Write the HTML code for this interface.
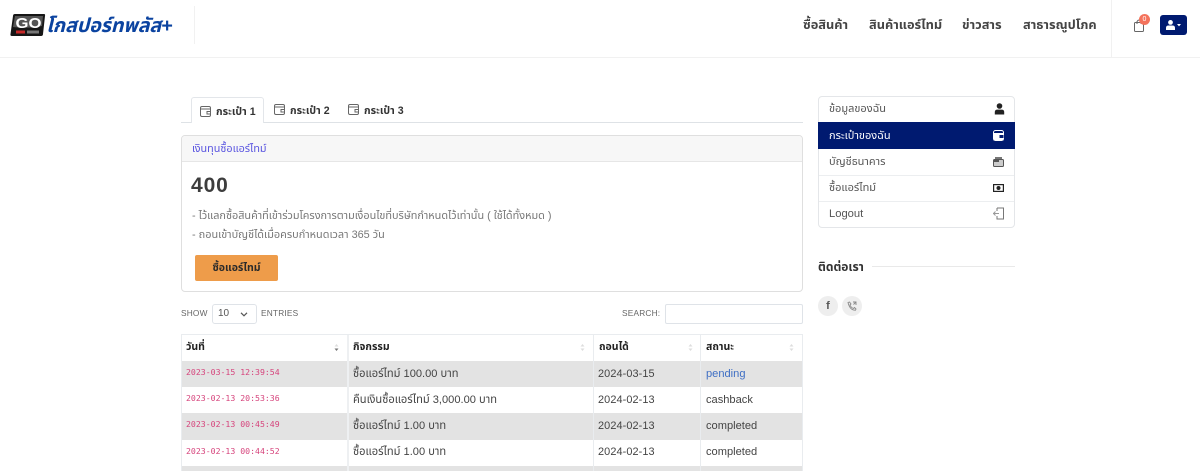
<!DOCTYPE html>
<html lang="th"><head><meta charset="utf-8"><title>โกสปอร์ทพลัส</title>
<style>
*{box-sizing:border-box}
html,body{margin:0;padding:0}
body{width:1200px;height:471px;overflow:hidden;position:relative;background:#fff;font-family:"Liberation Sans","Noto Sans Thai","Noto Sans CJK SC",sans-serif;color:#444}
.a{position:absolute;white-space:nowrap}
.nav{top:17px;font-size:12.8px;font-weight:700;color:#444;line-height:16px}
.tab{top:104px;font-size:10.6px;font-weight:700;color:#333;line-height:15px}
.m{left:829px;font-size:11px;line-height:14px;color:#555}
.r{position:absolute;left:182px;width:620px}
.c{position:absolute;white-space:nowrap;font-size:11.1px;line-height:14px;color:#444}
.d{font-size:10.9px;letter-spacing:.1px}
.t{font-family:"DejaVu Sans Mono","Liberation Mono",monospace;font-size:8.2px;color:#d6447c}
.th{font-weight:700;font-size:10.5px;color:#222}
.v{position:absolute;width:1px;top:335px;height:136px;background:#e9ecef}
.lab{font-size:8.3px;line-height:11px;letter-spacing:.2px;color:#666}
</style></head><body>

<div class="a" style="left:0;top:57px;width:1200px;height:1px;background:#f1f1f1"></div>
<div class="a" style="left:194px;top:6px;width:1px;height:38px;background:#f1f1f1"></div>
<div class="a" style="left:1111px;top:0;width:1px;height:57px;background:#f1f1f1"></div>

<svg class="a" style="left:10px;top:13px" width="36" height="24" viewBox="0 0 36 24">
<path d="M5 1H34Q35.5 1 35 3L33 21Q33 23 31 23H2Q0 23 .5 21L3 3Q3 1 5 1Z" fill="#161616"/>
<path d="M5 3H33L32 13Q18 16 3 14Z" fill="#555"/>
<text x="5.5" y="15" font-family="Liberation Sans" font-weight="700" font-size="15" fill="#fff" textLength="26" lengthAdjust="spacingAndGlyphs">GO</text>
<rect x="6" y="17.5" width="9" height="3" fill="#c62828"/>
<rect x="17" y="17.5" width="12" height="3" fill="#777"/>
</svg>
<div class="a" style="left:46px;top:14px;font-size:19.7px;font-weight:700;font-style:italic;color:#0b43a0;line-height:24px;letter-spacing:-.1px">โกสปอร์ทพลัส+</div>

<div class="a nav" style="left:803px">ซื้อสินค้า</div>
<div class="a nav" style="left:869px">สินค้าแอร์ไทม์</div>
<div class="a nav" style="left:962px">ข่าวสาร</div>
<div class="a nav" style="left:1023px">สาธารณูปโภค</div>

<svg class="a" style="left:1133px;top:19px" width="12" height="13" viewBox="0 0 12 13" fill="none" stroke="#666" stroke-width="1"><rect x="1.5" y="3.5" width="9" height="9" rx="1"/><path d="M4 5V2.5Q6-.5 8 2.5V5"/></svg>
<div class="a" style="left:1139px;top:14px;width:11px;height:11px;border-radius:50%;background:#f4735c;color:#fff;font-size:7px;line-height:11px;text-align:center">0</div>
<div class="a" style="left:1160px;top:15px;width:27px;height:20px;border-radius:3px;background:#001a70"></div>
<svg class="a" style="left:1166px;top:20px" width="16" height="10" viewBox="0 0 16 10" fill="#fff"><circle cx="4.5" cy="2.4" r="2.4"/><path d="M0 10V8Q0 5.5 2.5 5.5H6.5Q9 5.5 9 8V10Z"/><path d="M11 4H15L13 6.4Z"/></svg>

<div class="a" style="left:181px;top:122px;width:622px;height:1px;background:#dee2e6"></div>
<div class="a" style="left:191px;top:97px;width:73px;height:26px;background:#fff;border:1px solid #e3e6ea;border-bottom:0;border-radius:3px 3px 0 0"></div>
<svg class="a" style="left:200px;top:106px" width="11" height="11" viewBox="0 0 11 11" fill="none" stroke="#666"><rect x=".5" y=".5" width="10" height="10" rx="1.5"/><path d="M.5 3H10.5M10.5 5.5H7V8H10.5"/></svg>
<div class="a tab" style="left:216px;top:105px">กระเป๋า 1</div>
<svg class="a" style="left:274px;top:104px" width="11" height="11" viewBox="0 0 11 11" fill="none" stroke="#666"><rect x=".5" y=".5" width="10" height="10" rx="1.5"/><path d="M.5 3H10.5M10.5 5.5H7V8H10.5"/></svg>
<div class="a tab" style="left:290px">กระเป๋า 2</div>
<svg class="a" style="left:348px;top:104px" width="11" height="11" viewBox="0 0 11 11" fill="none" stroke="#666"><rect x=".5" y=".5" width="10" height="10" rx="1.5"/><path d="M.5 3H10.5M10.5 5.5H7V8H10.5"/></svg>
<div class="a tab" style="left:364px">กระเป๋า 3</div>

<div class="a" style="left:181px;top:135px;width:622px;height:157px;border:1px solid #dfdfdf;border-radius:4px"></div>
<div class="a" style="left:182px;top:136px;width:620px;height:26px;background:#f7f7f7;border-bottom:1px solid #e6e6e6;border-radius:3px 3px 0 0"></div>
<div class="a" style="left:192px;top:142px;font-size:10.8px;line-height:14px;color:#5a55e0">เงินทุนซื้อแอร์ไทม์</div>
<div class="a" style="left:191px;top:174px;font-size:21px;line-height:24px;font-weight:700;color:#3d3d3d;letter-spacing:.9px">400</div>
<div class="a" style="left:192px;top:209px;font-size:10.87px;line-height:15px;color:#777">- ไว้แลกซื้อสินค้าที่เข้าร่วมโครงการตามเงื่อนไขที่บริษัทกำหนดไว้เท่านั้น ( ใช้ได้ทั้งหมด )</div>
<div class="a" style="left:192px;top:228px;font-size:10.9px;line-height:15px;color:#777">- ถอนเข้าบัญชีได้เมื่อครบกำหนดเวลา 365 วัน</div>
<div class="a" style="left:195px;top:255px;width:83px;height:26px;background:#ee9c4a;border-radius:2px;font-size:10.5px;font-weight:700;line-height:27px;text-align:center;color:#2a2a2a">ซื้อแอร์ไทม์</div>

<div class="a lab" style="left:181px;top:308px">SHOW</div>
<div class="a" style="left:212px;top:304px;width:45px;height:20px;border:1px solid #dfe3e8;border-radius:3px;font-size:10px;line-height:18px;padding-left:5px;color:#555">10</div>
<svg class="a" style="left:240px;top:312px" width="8" height="5" viewBox="0 0 8 5" fill="none" stroke="#555" stroke-width="1.2"><path d="M1 .8L4 3.8L7 .8"/></svg>
<div class="a lab" style="left:261px;top:308px">ENTRIES</div>
<div class="a lab" style="left:622px;top:308px">SEARCH:</div>
<div class="a" style="left:665px;top:304px;width:138px;height:20px;border:1px solid #dfe3e8;border-radius:2px"></div>

<div class="a" style="left:181px;top:334px;width:622px;height:137px;border:1px solid #e9ecef;border-bottom:0"></div>
<div class="r" style="top:361px;height:26px;background:#e3e3e3"></div>
<div class="r" style="top:413px;height:27px;background:#e3e3e3"></div>
<div class="r" style="top:466px;height:5px;background:#e3e3e3"></div>
<div class="v" style="left:347px;width:2px;background:#eef0f2"></div>
<div class="v" style="left:593px"></div>
<div class="v" style="left:700px"></div>

<div class="c th" style="left:186px;top:340px">วันที่</div>
<div class="c th" style="left:353px;top:340px">กิจกรรม</div>
<div class="c th" style="left:599px;top:340px">ถอนได้</div>
<div class="c th" style="left:706px;top:340px">สถานะ</div>
<svg class="a" style="left:334px;top:343px" width="5" height="9" viewBox="0 0 5 9"><path d="M.5 3.5L2.5 1L4.5 3.5Z" fill="#ddd"/><path d="M.5 5.5L2.5 8L4.5 5.5Z" fill="#777"/></svg>
<svg class="a" style="left:580px;top:343px" width="5" height="9" viewBox="0 0 5 9" fill="#ddd"><path d="M.5 3.5L2.5 1L4.5 3.5Z"/><path d="M.5 5.5L2.5 8L4.5 5.5Z"/></svg>
<svg class="a" style="left:688px;top:343px" width="5" height="9" viewBox="0 0 5 9" fill="#ddd"><path d="M.5 3.5L2.5 1L4.5 3.5Z"/><path d="M.5 5.5L2.5 8L4.5 5.5Z"/></svg>
<svg class="a" style="left:789px;top:343px" width="5" height="9" viewBox="0 0 5 9" fill="#ddd"><path d="M.5 3.5L2.5 1L4.5 3.5Z"/><path d="M.5 5.5L2.5 8L4.5 5.5Z"/></svg>

<div class="c t" style="left:186px;top:365px">2023-03-15 12:39:54</div>
<div class="c" style="left:353px;top:367px">ซื้อแอร์ไทม์ 100.00 บาท</div>
<div class="c d" style="left:598px;top:367px">2024-03-15</div>
<div class="c" style="left:706px;top:367px;color:#3f6fc4">pending</div>

<div class="c t" style="left:186px;top:391px">2023-02-13 20:53:36</div>
<div class="c" style="left:353px;top:393px">คืนเงินซื้อแอร์ไทม์ 3,000.00 บาท</div>
<div class="c d" style="left:598px;top:393px">2024-02-13</div>
<div class="c" style="left:706px;top:393px">cashback</div>

<div class="c t" style="left:186px;top:417px">2023-02-13 00:45:49</div>
<div class="c" style="left:353px;top:419px">ซื้อแอร์ไทม์ 1.00 บาท</div>
<div class="c d" style="left:598px;top:419px">2024-02-13</div>
<div class="c" style="left:706px;top:419px">completed</div>

<div class="c t" style="left:186px;top:444px">2023-02-13 00:44:52</div>
<div class="c" style="left:353px;top:445px">ซื้อแอร์ไทม์ 1.00 บาท</div>
<div class="c d" style="left:598px;top:445px">2024-02-13</div>
<div class="c" style="left:706px;top:445px">completed</div>

<div class="a" style="left:818px;top:96px;width:197px;height:132px;border:1px solid #e4e6e9;border-radius:4px"></div>
<div class="a" style="left:818px;top:122px;width:197px;height:27px;background:#001a70"></div>
<div class="a" style="left:819px;top:175px;width:195px;height:1px;background:#eceef0"></div>
<div class="a" style="left:819px;top:201px;width:195px;height:1px;background:#eceef0"></div>
<div class="a m" style="top:102px">ข้อมูลของฉัน</div>
<div class="a m" style="top:129px;color:#fff">กระเป๋าของฉัน</div>
<div class="a m" style="top:155px">บัญชีธนาคาร</div>
<div class="a m" style="top:181px">ซื้อแอร์ไทม์</div>
<div class="a m" style="top:207px;font-size:11.2px">Logout</div>
<svg class="a" style="left:994px;top:103px" width="11" height="12" viewBox="0 0 11 12" fill="#222"><circle cx="5.5" cy="3" r="2.8"/><path d="M.8 11.5V9Q.8 6.6 3.3 6.6H7.7Q10.2 6.6 10.2 9V11.5Z"/></svg>
<svg class="a" style="left:993px;top:130px" width="11" height="11" viewBox="0 0 11 11"><rect x=".5" y=".5" width="10" height="10" rx="2" fill="none" stroke="#fff"/><path d="M.5 3H10.5V10.5H.5Z" fill="#fff"/><rect x="6.5" y="5" width="4" height="3" fill="#001a70"/></svg>
<svg class="a" style="left:993px;top:157px" width="11" height="10" viewBox="0 0 11 10"><path d="M2 0H9V2H2Z" fill="#777"/><rect x=".5" y="2.5" width="10" height="7" rx="1" fill="#ccc" stroke="#555"/><path d="M1 3H6V5H1Z" fill="#555"/></svg>
<svg class="a" style="left:993px;top:184px" width="11" height="8" viewBox="0 0 11 8"><rect x=".6" y=".6" width="9.8" height="6.8" fill="none" stroke="#222" stroke-width="1.2"/><circle cx="5.5" cy="4" r="2" fill="#222"/></svg>
<svg class="a" style="left:993px;top:207px" width="12" height="13" viewBox="0 0 12 13" fill="none" stroke="#777"><path d="M4 1H10.5V12H4V9M4 4V1"/><path d="M0 6.5H6M2.5 4.5L.5 6.5L2.5 8.5" stroke="#999"/></svg>

<div class="a" style="left:818px;top:259px;font-size:12px;line-height:16px;font-weight:700;color:#333">ติดต่อเรา</div>
<div class="a" style="left:872px;top:266px;width:143px;height:1px;background:#e9e9e9"></div>
<div class="a" style="left:818px;top:296px;width:20px;height:20px;border-radius:50%;background:#eee;color:#555;font:700 11px/20px 'Liberation Sans',sans-serif;text-align:center">f</div>
<div class="a" style="left:842px;top:296px;width:20px;height:20px;border-radius:50%;background:#eee"></div>
<svg class="a" style="left:847px;top:301px" width="10" height="10" viewBox="0 0 10 10" fill="none" stroke="#888" stroke-width=".9"><path d="M1 1.5L2.5 1L4 3L3 4Q4 6.5 6.5 7.5L7.5 6.5L9 8L8.5 9.2Q3 9.5 1 1.5Z"/><path d="M6 1H9V4M9 1L6.5 3.5"/></svg>
</body></html>
